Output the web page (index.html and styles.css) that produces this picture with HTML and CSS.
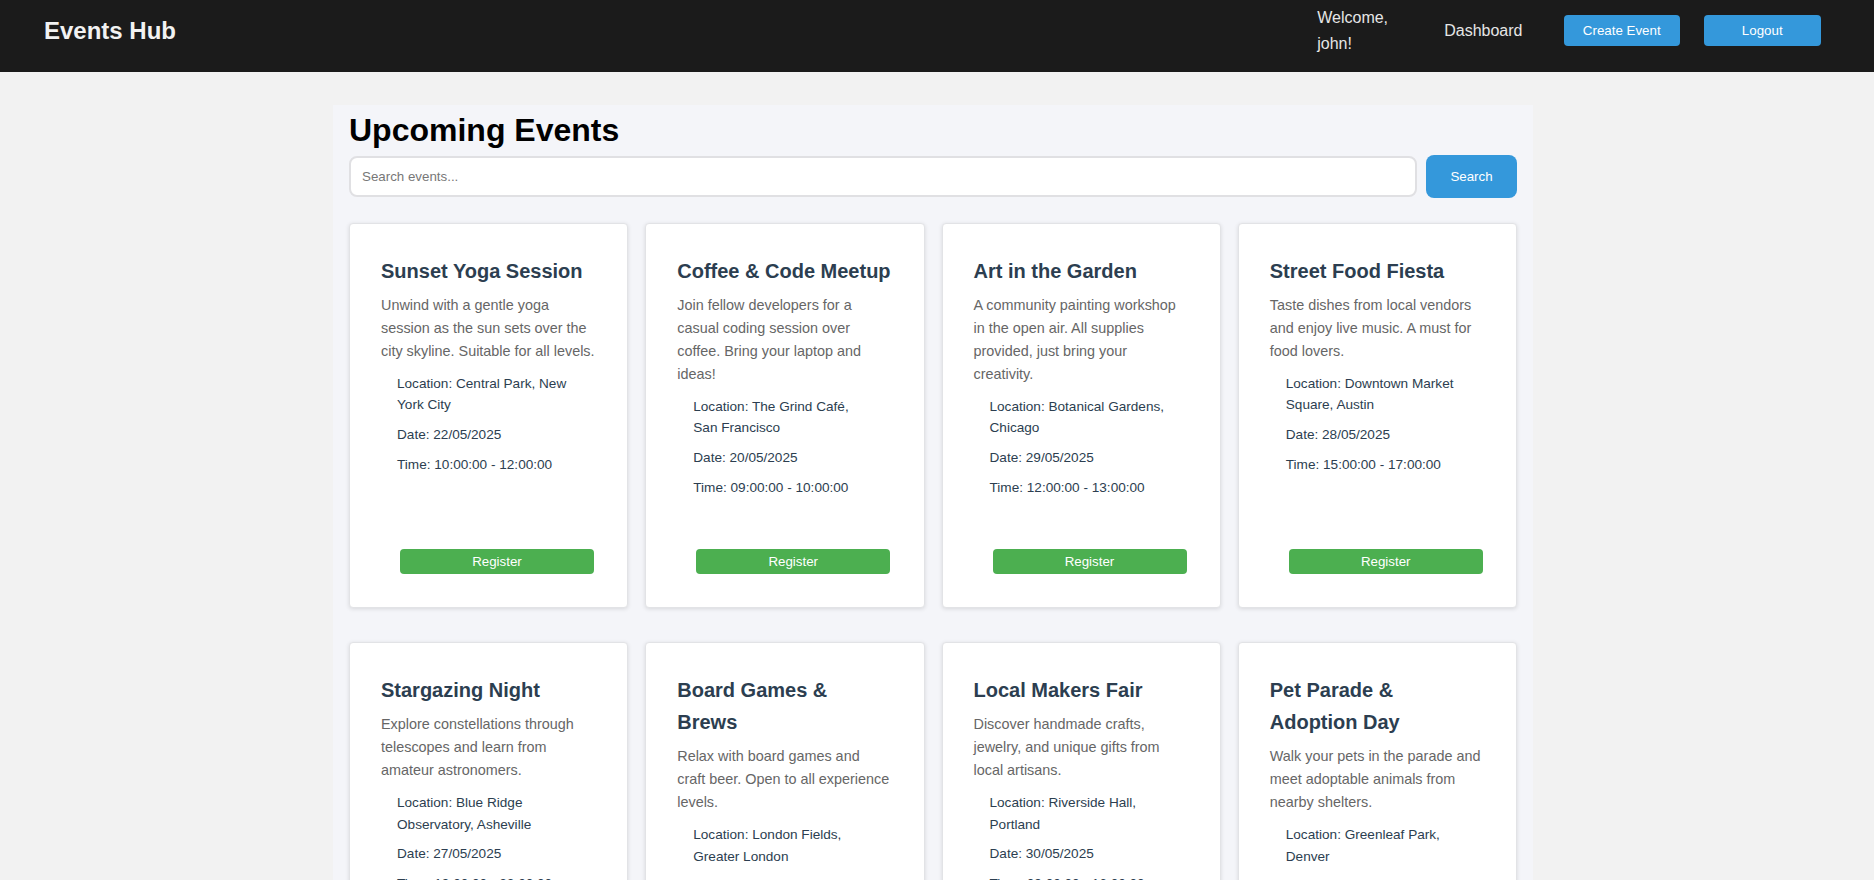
FILE: index.html
```html
<!DOCTYPE html>
<html lang="en">
<head>
<meta charset="utf-8">
<title>Events Hub</title>
<link rel="stylesheet" href="styles.css">
</head>
<body>
<header class="topbar">
  <div class="brand">Events Hub</div>
  <nav class="nav">
    <span class="welcome">Welcome, john!</span>
    <a class="nav-link" href="#">Dashboard</a>
    <a class="nav-btn nav-btn-create" href="#">Create Event</a>
    <a class="nav-btn" href="#">Logout</a>
  </nav>
</header>

<main class="page">
  <h1 class="page-title">Upcoming Events</h1>
  <form class="search-row">
    <input class="search-input" type="text" placeholder="Search events...">
    <button class="search-btn" type="button">Search</button>
  </form>

  <div class="grid">
    <div class="card">
      <h3 class="card-title">Sunset Yoga Session</h3>
      <p class="card-desc">Unwind with a gentle yoga session as the sun sets over the city skyline. Suitable for all levels.</p>
      <div class="details">
        <p>Location: Central Park, New York City</p>
        <p>Date: 22/05/2025</p>
        <p>Time: 10:00:00 - 12:00:00</p>
      </div>
      <div class="actions"><button class="register" type="button">Register</button></div>
    </div>

    <div class="card">
      <h3 class="card-title">Coffee &amp; Code Meetup</h3>
      <p class="card-desc">Join fellow developers for a casual coding session over coffee. Bring your laptop and ideas!</p>
      <div class="details">
        <p>Location: The Grind Café, San Francisco</p>
        <p>Date: 20/05/2025</p>
        <p>Time: 09:00:00 - 10:00:00</p>
      </div>
      <div class="actions"><button class="register" type="button">Register</button></div>
    </div>

    <div class="card">
      <h3 class="card-title">Art in the Garden</h3>
      <p class="card-desc">A community painting workshop in the open air. All supplies provided, just bring your creativity.</p>
      <div class="details">
        <p>Location: Botanical Gardens, Chicago</p>
        <p>Date: 29/05/2025</p>
        <p>Time: 12:00:00 - 13:00:00</p>
      </div>
      <div class="actions"><button class="register" type="button">Register</button></div>
    </div>

    <div class="card">
      <h3 class="card-title">Street Food Fiesta</h3>
      <p class="card-desc">Taste dishes from local vendors and enjoy live music. A must for food lovers.</p>
      <div class="details">
        <p>Location: Downtown Market Square, Austin</p>
        <p>Date: 28/05/2025</p>
        <p>Time: 15:00:00 - 17:00:00</p>
      </div>
      <div class="actions"><button class="register" type="button">Register</button></div>
    </div>

    <div class="card">
      <h3 class="card-title">Stargazing Night</h3>
      <p class="card-desc">Explore constellations through telescopes and learn from amateur astronomers.</p>
      <div class="details">
        <p>Location: Blue Ridge Observatory, Asheville</p>
        <p>Date: 27/05/2025</p>
        <p>Time: 19:00:00 - 22:00:00</p>
      </div>
      <div class="actions"><button class="register" type="button">Register</button></div>
    </div>

    <div class="card">
      <h3 class="card-title">Board Games &amp; Brews</h3>
      <p class="card-desc">Relax with board games and craft beer. Open to all experience levels.</p>
      <div class="details">
        <p>Location: London Fields, Greater London</p>
        <p>Date: 24/05/2025</p>
        <p>Time: 18:00:00 - 21:00:00</p>
      </div>
      <div class="actions"><button class="register" type="button">Register</button></div>
    </div>

    <div class="card">
      <h3 class="card-title">Local Makers Fair</h3>
      <p class="card-desc">Discover handmade crafts, jewelry, and unique gifts from local artisans.</p>
      <div class="details">
        <p>Location: Riverside Hall, Portland</p>
        <p>Date: 30/05/2025</p>
        <p>Time: 09:00:00 - 16:00:00</p>
      </div>
      <div class="actions"><button class="register" type="button">Register</button></div>
    </div>

    <div class="card">
      <h3 class="card-title">Pet Parade &amp; Adoption Day</h3>
      <p class="card-desc">Walk your pets in the parade and meet adoptable animals from nearby shelters.</p>
      <div class="details">
        <p>Location: Greenleaf Park, Denver</p>
        <p>Date: 31/05/2025</p>
        <p>Time: 10:00:00 - 14:00:00</p>
      </div>
      <div class="actions"><button class="register" type="button">Register</button></div>
    </div>
  </div>
</main>
</body>
</html>
```
FILE: styles.css
```css
* { box-sizing: border-box; }

body {
  margin: 0;
  background: #f2f2f2;
  font-family: "Liberation Sans", Arial, sans-serif;
  color: #222;
}

.topbar {
  display: flex;
  justify-content: space-between;
  align-items: center;
  height: 72px;
  padding: 0 53.5px 11px 44px;
  background: #1b1b1b;
}

.brand {
  font-size: 24px;
  font-weight: bold;
  color: #f2f2f2;
}

.nav {
  display: flex;
  align-items: center;
}

.welcome {
  width: 100px;
  margin-right: 27px;
  font-size: 16px;
  line-height: 1.6;
  color: #e6e6e6;
}

.nav-link {
  margin-right: 41px;
  font-size: 16px;
  line-height: 1.6;
  color: #e6e6e6;
  text-decoration: none;
}

.nav-btn {
  display: flex;
  align-items: center;
  justify-content: center;
  width: 116.5px;
  height: 31px;
  border-radius: 4px;
  background: #3498db;
  color: #fff;
  font-size: 13.333px;
  text-decoration: none;
}

.nav-btn-create { margin-right: 24px; }

.page {
  width: 1200px;
  margin: 32.5px 0 0 calc(50% - 604px);
  padding: 0 16px 16px;
  background: #f4f5f9;
}

.page-title {
  margin: 0;
  font-size: 32px;
  line-height: 50px;
  font-weight: bold;
  color: #000;
}

.search-row {
  display: flex;
  align-items: center;
  gap: 9px;
  margin: 0 0 25px;
}

.search-input {
  flex: 1;
  height: 41px;
  padding: 0 11px;
  border: 2px solid #e0e0e3;
  border-radius: 8px;
  background: #fff;
  font-family: "Liberation Sans", Arial, sans-serif;
  font-size: 13.333px;
  color: #333;
  outline: none;
}

.search-input::placeholder { color: #777; }

.search-btn {
  width: 91px;
  height: 43px;
  border: none;
  border-radius: 8px;
  background: #3498db;
  color: #fff;
  font-family: "Liberation Sans", Arial, sans-serif;
  font-size: 13.333px;
}

.grid {
  display: grid;
  grid-template-columns: repeat(4, 1fr);
  column-gap: 17px;
  row-gap: 34px;
}

.card {
  display: flex;
  flex-direction: column;
  padding: 31px 32.25px 33px 31px;
  background: #fff;
  border: 1px solid #e2e3e6;
  border-radius: 4px;
  box-shadow: 0 1px 4px rgba(0, 0, 0, 0.12);
}

.card-title {
  margin: 0 0 7px;
  font-size: 20px;
  line-height: 32px;
  font-weight: bold;
  color: #2c3e50;
}

.card-desc {
  margin: 0 0 10px;
  font-size: 14.4px;
  line-height: 23.04px;
  color: #666;
}

.details {
  padding: 0 16px;
}

.details p {
  margin: 0 0 8px;
  font-size: 13.6px;
  line-height: 21.76px;
  color: #2c3e50;
}

.actions {
  margin-top: auto;
  padding: 42px 0 0 19px;
}

.register {
  display: block;
  width: 194px;
  height: 25px;
  border: none;
  border-radius: 4px;
  background: #4caf50;
  color: #fff;
  font-family: "Liberation Sans", Arial, sans-serif;
  font-size: 13.333px;
}
```
